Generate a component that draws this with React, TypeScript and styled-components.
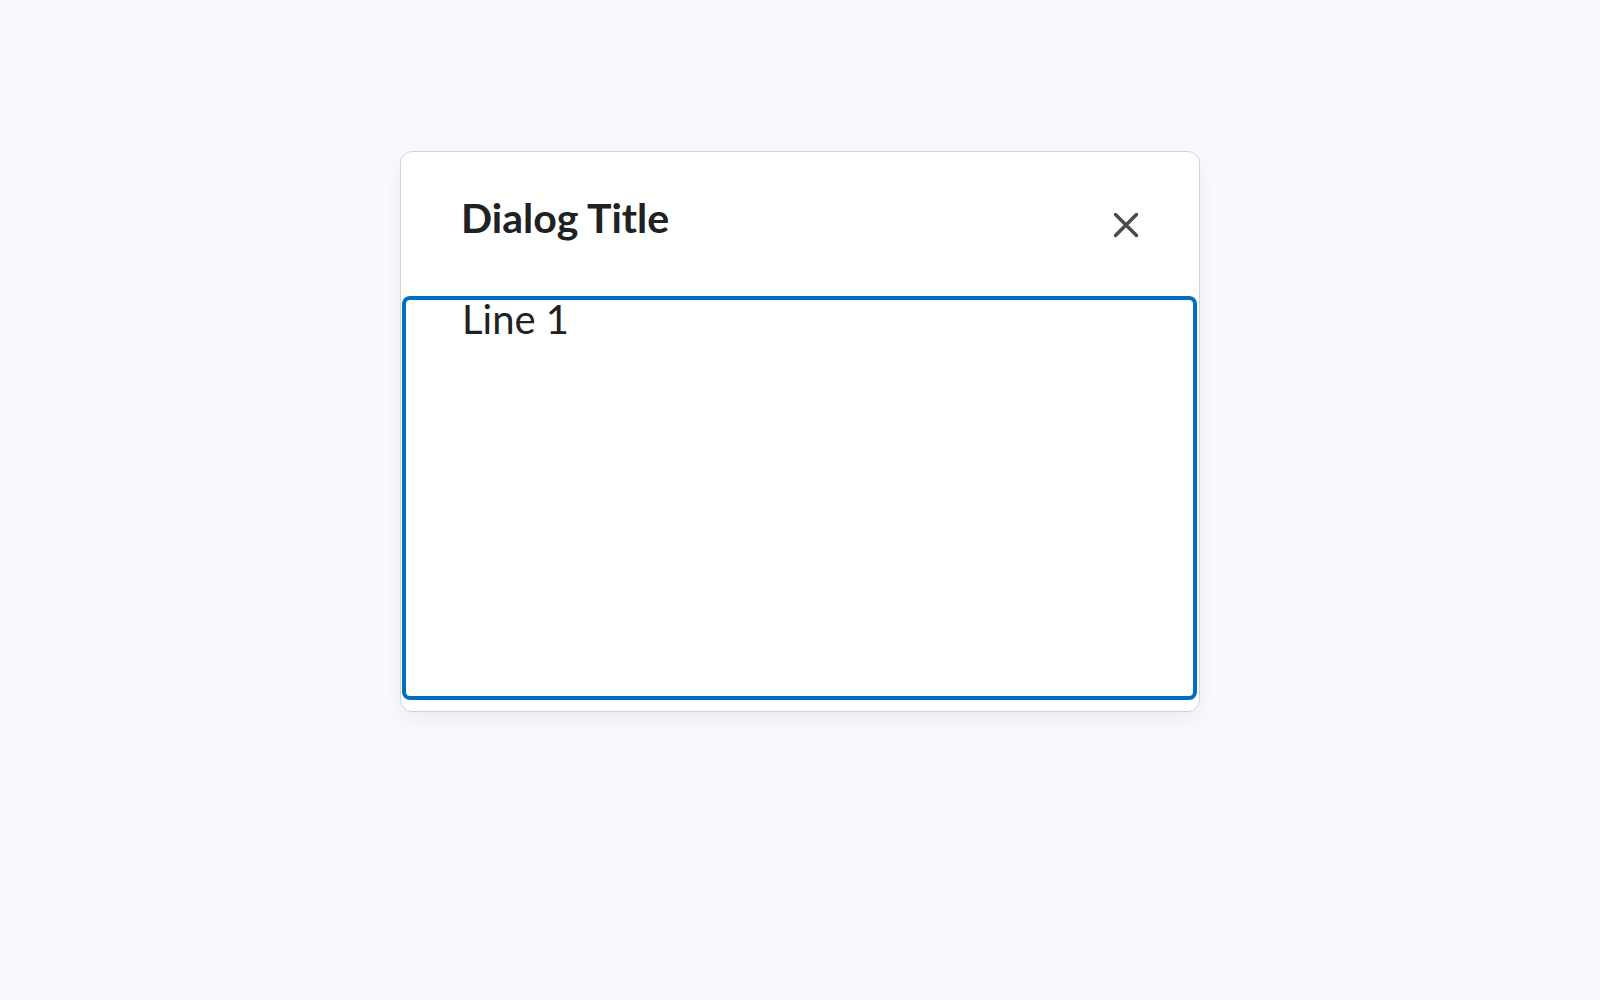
import styled, { createGlobalStyle } from 'styled-components';

const GlobalStyle = createGlobalStyle`
  html, body {
    margin: 0;
    padding: 0;
    background: #f9fafd;
    font-family: Lato, 'Noto Sans', sans-serif;
    color: #202122;
  }
`;

const Page = styled.div`
  min-height: 1000px;
  padding-top: 151px;
  box-sizing: border-box;
`;

const Dialog = styled.div`
  width: 800px;
  margin: 0 auto;
  box-sizing: border-box;
  background: #ffffff;
  border: 1px solid #cdd5dc;
  border-radius: 12px;
  box-shadow: 0 8px 24px rgba(0, 0, 0, 0.06);
  display: flex;
  flex-direction: column;
`;

const Header = styled.div`
  display: flex;
  align-items: flex-start;
  padding: 42px 55px 53px 60px;
`;

const Title = styled.h2`
  flex: 1;
  margin: 0;
  font-size: 41px;
  font-weight: 700;
  line-height: 48px;
  color: #202122;
`;

const CloseButton = styled.button`
  width: 36px;
  height: 36px;
  margin-top: 13px;
  padding: 0;
  border: none;
  background: transparent;
  cursor: pointer;
  display: flex;
  align-items: center;
  justify-content: center;
  color: #494c4e;
`;

// focused content area, the ring is drawn inset so the text can sit right under it
const Content = styled.div`
  height: 404px;
  margin: 0 2px 11px 1px;
  padding: 0 60px;
  box-sizing: border-box;
  border-radius: 8px;
  box-shadow: inset 0 0 0 4px #006fbf;
  font-size: 40px;
  line-height: 46px;
  outline: none;
`;

const CloseIcon = () => (
  <svg width='36' height='36' viewBox='0 0 36 36' fill='none'>
    <path
      d='M7.5 7.5 L28.5 28.5 M28.5 7.5 L7.5 28.5'
      stroke='currentColor'
      strokeWidth='3.5'
      strokeLinecap='round'
    />
  </svg>
);

const App = () => {
  return (
    <Page>
      <GlobalStyle />
      <Dialog role='dialog' aria-labelledby='dialog-title'>
        <Header>
          <Title id='dialog-title'>Dialog Title</Title>
          <CloseButton aria-label='Close this dialog'>
            <CloseIcon />
          </CloseButton>
        </Header>
        <Content tabIndex={0}>Line 1</Content>
      </Dialog>
    </Page>
  );
};

export default App;
